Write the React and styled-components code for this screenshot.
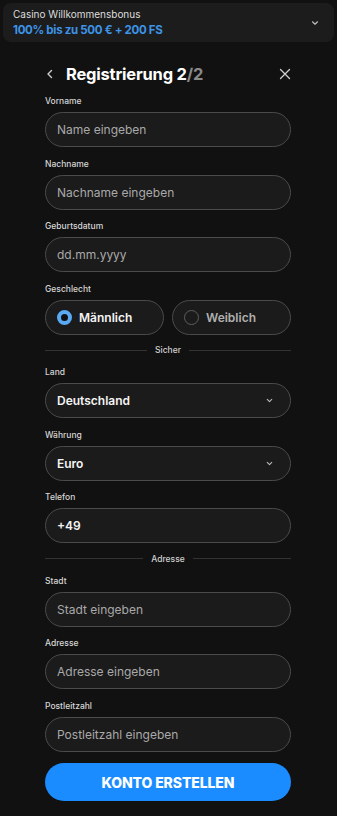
import React from 'react'
import styled, { createGlobalStyle } from 'styled-components'

const Global = createGlobalStyle`
  html, body { margin: 0; padding: 0; background: #111111; }
  body { font-family: Inter, "Noto Sans", sans-serif; color: #fff; }
  * { box-sizing: border-box; }
`

const Page = styled.div`
  width: 337px;
  min-height: 816px;
  background: #111111;
  padding: 3px 3px 14px;
`

const Bonus = styled.div`
  height: 39px;
  background: #1c1c1d;
  border-radius: 8px;
  display: flex;
  align-items: center;
  justify-content: space-between;
  padding: 0 14px 0 10px;
`

const BonusText = styled.div`
  display: flex;
  flex-direction: column;
  gap: 3px;
`

const BonusTitle = styled.span`
  font-size: 10px;
  color: #dcdcdc;
  line-height: 12px;
`

const BonusValue = styled.span`
  font-size: 11.5px;
  font-weight: 700;
  color: #3d93e6;
  line-height: 14px;
  letter-spacing: -0.3px;
`

const Form = styled.div`
  padding: 0 43px 0 42px;
`

const Header = styled.div`
  height: 53px;
  display: flex;
  align-items: center;
  padding-top: 10px;
`

const IconBtn = styled.span`
  display: flex;
  align-items: center;
  justify-content: center;
  color: #cfcfcf;
`

const Title = styled.h1`
  flex: 1;
  margin: 0 0 0 11px;
  font-size: 16.5px;
  font-weight: 700;
  letter-spacing: -0.2px;
  color: #fff;
`

const Muted = styled.span`
  color: #8a8a8a;
`

const Field = styled.div`
  display: flex;
  flex-direction: column;
  gap: 5px;
  margin-bottom: 10.5px;
`

const Label = styled.label`
  font-size: 8.5px;
  line-height: 12px;
  font-weight: 500;
  color: #d6d6d6;
`

const Box = styled.div`
  height: 35px;
  border: 1.5px solid #4b4b4b;
  border-radius: 18px;
  background: #1b1b1b;
  display: flex;
  align-items: center;
  justify-content: space-between;
  padding: 0 16px 0 11px;
  font-size: 12px;
  color: ${p => (p.$value ? '#f4f4f4' : '#a9a9a9')};
  font-weight: ${p => (p.$value ? 600 : 400)};
`

const Radios = styled.div`
  display: grid;
  grid-template-columns: 1fr 1fr;
  gap: 8px;
`

const Radio = styled(Box)`
  justify-content: flex-start;
  gap: 7px;
  padding-left: 11px;
  font-weight: 600;
  color: ${p => (p.$on ? '#f4f4f4' : '#b0b0b0')};
`

const Dot = styled.span`
  width: 15px;
  height: 15px;
  border-radius: 50%;
  flex: none;
  ${p =>
    p.$on
      ? 'background: #111; border: 4px solid #5aa9f5;'
      : 'border: 1.5px solid #5e5e5e;'}
`

const Divider = styled.div`
  display: flex;
  align-items: center;
  gap: 8px;
  font-size: 8.5px;
  font-weight: 500;
  color: #d0d0d0;
  margin: 3px 0 11px;
  &::before, &::after {
    content: '';
    flex: 1;
    height: 1px;
    background: #333;
  }
`

const Submit = styled.button`
  width: 100%;
  height: 38px;
  border: none;
  border-radius: 19px;
  background: #1a8cff;
  color: #fff;
  font-family: inherit;
  font-size: 14px;
  font-weight: 800;
  letter-spacing: -0.1px;
  margin-top: 1px;
`

const Chevron = ({ size = 9 }) => (
  <svg width={size} height={size} viewBox="0 0 10 10" fill="none">
    <path d="M2.5 3.8 L5 6.2 L7.5 3.8" stroke="#bdbdbd" strokeWidth="1.2" strokeLinecap="round" strokeLinejoin="round" />
  </svg>
)

const TextField = ({ label, placeholder, value, select }) => (
  <Field>
    <Label>{label}</Label>
    <Box $value={!!value}>
      <span>{value || placeholder}</span>
      {select && <Chevron />}
    </Box>
  </Field>
)

export default function App() {
  return (
    <Page>
      <Global />
      <Bonus>
        <BonusText>
          <BonusTitle>Casino Willkommensbonus</BonusTitle>
          <BonusValue>100% bis zu 500 € + 200 FS</BonusValue>
        </BonusText>
        <Chevron size={10} />
      </Bonus>
      <Form>
        <Header>
          <IconBtn>
            <svg width="10" height="12" viewBox="0 0 10 12" fill="none">
              <path d="M6.5 2.5 L3 6 L6.5 9.5" stroke="#cfcfcf" strokeWidth="1.4" strokeLinecap="round" strokeLinejoin="round" />
            </svg>
          </IconBtn>
          <Title>
            Registrierung 2<Muted>/2</Muted>
          </Title>
          <IconBtn>
            <svg width="12" height="12" viewBox="0 0 12 12" fill="none">
              <path d="M1.5 1.5 L10.5 10.5 M10.5 1.5 L1.5 10.5" stroke="#cfcfcf" strokeWidth="1.3" strokeLinecap="round" />
            </svg>
          </IconBtn>
        </Header>
        <TextField label="Vorname" placeholder="Name eingeben" />
        <TextField label="Nachname" placeholder="Nachname eingeben" />
        <TextField label="Geburtsdatum" placeholder="dd.mm.yyyy" />
        <Field>
          <Label>Geschlecht</Label>
          <Radios>
            <Radio $on>
              <Dot $on />
              Männlich
            </Radio>
            <Radio>
              <Dot />
              Weiblich
            </Radio>
          </Radios>
        </Field>
        <Divider>Sicher</Divider>
        <TextField label="Land" value="Deutschland" select />
        <TextField label="Währung" value="Euro" select />
        <TextField label="Telefon" value="+49" />
        <Divider>Adresse</Divider>
        <TextField label="Stadt" placeholder="Stadt eingeben" />
        <TextField label="Adresse" placeholder="Adresse eingeben" />
        <TextField label="Postleitzahl" placeholder="Postleitzahl eingeben" />
        <Submit>KONTO ERSTELLEN</Submit>
      </Form>
    </Page>
  )
}
